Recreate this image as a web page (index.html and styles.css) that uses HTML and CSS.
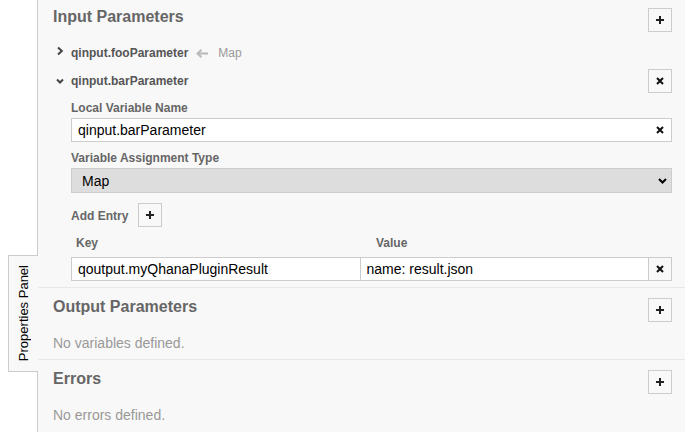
FILE: index.html
```html
<!DOCTYPE html>
<html>
<head>
<meta charset="utf-8">
<title>Properties Panel</title>
<link rel="stylesheet" href="styles.css">
</head>
<body>
<div class="app">
  <div class="gutter"></div>
  <div class="toggle"><span>Properties Panel</span></div>
  <div class="panel">
    <section class="group first">
      <div class="group-header">
        <h2 class="group-title">Input Parameters</h2>
        <button class="icon-btn"><svg class="ico" viewBox="0 0 8 8"><rect x="0" y="3" width="8" height="2"/><rect x="3" y="0" width="2" height="8"/></svg></button>
      </div>
      <div class="entries">
        <div class="entry-row">
          <svg class="chev" viewBox="0 0 14 20"><path d="M5 4.5 L8.8 8 L5 11.5"/></svg>
          <span class="entry-title">qinput.fooParameter</span>
          <svg class="arrow" viewBox="0 0 12 20"><path class="shaft" d="M2 10.5 H12"/><path class="head" d="M5.5 6.8 L1.6 10.5 L5.5 14.2"/></svg>
          <span class="entry-sub">Map</span>
        </div>
        <div class="entry-row open">
          <svg class="chev" viewBox="0 0 14 20"><path d="M4 8.5 L7 11.5 L10 8.5"/></svg>
          <span class="entry-title">qinput.barParameter</span>
          <button class="icon-btn push"><svg class="ico" viewBox="0 0 8 8"><path class="x" d="M1 1 L7 7 M7 1 L1 7"/></svg></button>
        </div>
        <div class="entry-body">
          <label class="field-label">Local Variable Name</label>
          <div class="input-wrap">
            <input class="text-input" type="text" value="qinput.barParameter">
            <svg class="clear" viewBox="0 0 8 8"><path class="x" d="M1 1 L7 7 M7 1 L1 7"/></svg>
          </div>
          <label class="field-label second">Variable Assignment Type</label>
          <div class="select-wrap">
            <select class="select"><option>Map</option></select>
            <svg class="select-chev" viewBox="0 0 9 6"><path d="M1 1 L4.5 4.5 L8 1"/></svg>
          </div>
          <div class="add-row">
            <span class="field-label inline">Add Entry</span>
            <button class="icon-btn"><svg class="ico" viewBox="0 0 8 8"><rect x="0" y="3" width="8" height="2"/><rect x="3" y="0" width="2" height="8"/></svg></button>
          </div>
          <div class="kv-head"><span>Key</span><span>Value</span></div>
          <div class="kv-row">
            <input class="text-input" type="text" value="qoutput.myQhanaPluginResult">
            <input class="text-input joined" type="text" value="name: result.json">
            <button class="icon-btn joined"><svg class="ico" viewBox="0 0 8 8"><path class="x" d="M1 1 L7 7 M7 1 L1 7"/></svg></button>
          </div>
        </div>
      </div>
    </section>
    <section class="group">
      <div class="group-header">
        <h2 class="group-title">Output Parameters</h2>
        <button class="icon-btn"><svg class="ico" viewBox="0 0 8 8"><rect x="0" y="3" width="8" height="2"/><rect x="3" y="0" width="2" height="8"/></svg></button>
      </div>
      <p class="empty">No variables defined.</p>
    </section>
    <section class="group">
      <div class="group-header">
        <h2 class="group-title">Errors</h2>
        <button class="icon-btn"><svg class="ico" viewBox="0 0 8 8"><rect x="0" y="3" width="8" height="2"/><rect x="3" y="0" width="2" height="8"/></svg></button>
      </div>
      <p class="empty">No errors defined.</p>
    </section>
  </div>
</div>
</body>
</html>
```

FILE: styles.css
```css
* { box-sizing: border-box; }
html, body { margin: 0; padding: 0; background: #fff; }
body {
  font-family: "Liberation Sans", Arial, sans-serif;
  width: 685px;
  height: 432px;
  overflow: hidden;
}
.app { position: relative; display: flex; height: 432px; }
.gutter { width: 37px; flex: none; }
.panel {
  flex: 1;
  min-width: 0;
  background: #f8f8f8;
  border-left: 1px solid #ccc;
  overflow: hidden;
}
.toggle {
  position: absolute;
  left: 8px;
  top: 255px;
  width: 30px;
  height: 117px;
  background: #f8f8f8;
  border: 1px solid #ccc;
  border-right: none;
  display: flex;
  align-items: center;
  justify-content: center;
  z-index: 2;
}
.toggle span {
  writing-mode: vertical-rl;
  transform: rotate(180deg);
  font-size: 13px;
  line-height: 1;
  color: #000;
}
.group {
  border-top: 1px solid #e8e8e8;
  padding: 10px 13px 6px 15px;
}
.group.first { border-top: none; padding-top: 8px; }
.group-header {
  display: flex;
  justify-content: space-between;
  align-items: flex-start;
  height: 24px;
}
.group-title {
  margin: -1px 0 0;
  font-size: 16px;
  line-height: 20px;
  font-weight: bold;
  color: #666;
}
.icon-btn {
  flex: none;
  width: 24px;
  height: 24px;
  padding: 0;
  margin: 0;
  border: 1px solid #ccc;
  background: #f8f8f8;
  display: flex;
  align-items: center;
  justify-content: center;
}
.ico { width: 8px; height: 8px; fill: #222; display: block; }
.x { stroke: #111; stroke-width: 2; fill: none; }
.entries { margin-top: 11px; }
.entry-row { display: flex; align-items: flex-start; height: 24px; }
.entry-row + .entry-row { margin-top: 2px; }
.chev { width: 14px; height: 20px; flex: none; margin-right: 4px; }
.chev path { fill: none; stroke: #444; stroke-width: 2; }
.entry-title { font-size: 12px; line-height: 20px; font-weight: bold; color: #555; }
.entry-row.open .entry-title,
.entry-row.open .chev { margin-top: 2px; }
.arrow { width: 12px; height: 20px; flex: none; margin-left: 8px; }
.arrow path { fill: none; stroke: #bbb; stroke-width: 2.2; }
.entry-sub { margin-left: 10px; font-size: 12px; line-height: 20px; color: #999; }
.push { margin-left: auto; }
.entry-body { padding-left: 18px; margin-top: 5px; }
.field-label {
  display: block;
  font-size: 12px;
  line-height: 20px;
  font-weight: bold;
  color: #666;
}
.field-label.second { margin-top: 6px; }
.field-label.inline { padding-top: 3px; }
.input-wrap { position: relative; }
.text-input {
  display: block;
  width: 100%;
  min-width: 0;
  height: 24px;
  margin: 0;
  border: 1px solid #ccc;
  border-radius: 0;
  background: #fff;
  font: 14px "Liberation Sans", Arial, sans-serif;
  color: #000;
  padding: 0 0 0 6px;
  outline: none;
}
.clear { position: absolute; right: 8px; top: 8px; width: 8px; height: 8px; }
.select-wrap { position: relative; }
.select {
  display: block;
  width: 100%;
  height: 25px;
  margin: 0;
  -webkit-appearance: none;
  appearance: none;
  border: 1px solid #ccc;
  border-radius: 0;
  background: #ddd;
  font: 14px "Liberation Sans", Arial, sans-serif;
  color: #000;
  padding: 0 0 0 10px;
  outline: none;
}
.select-chev {
  position: absolute;
  right: 5px;
  top: 10px;
  width: 9px;
  height: 6px;
  pointer-events: none;
}
.select-chev path { fill: none; stroke: #000; stroke-width: 2; }
.add-row { display: flex; align-items: flex-start; gap: 10px; margin-top: 10px; }
.kv-head {
  display: grid;
  grid-template-columns: 300px 1fr;
  padding-left: 5px;
  margin-top: 6px;
  font-size: 12px;
  line-height: 20px;
  font-weight: bold;
  color: #666;
}
.kv-row { display: flex; margin-top: 4px; }
.kv-row .text-input { flex: 1; width: auto; }
.joined { margin-left: -1px; }
.empty {
  margin: 11px 0 0;
  font-size: 14px;
  line-height: 20px;
  color: #999;
}
```
